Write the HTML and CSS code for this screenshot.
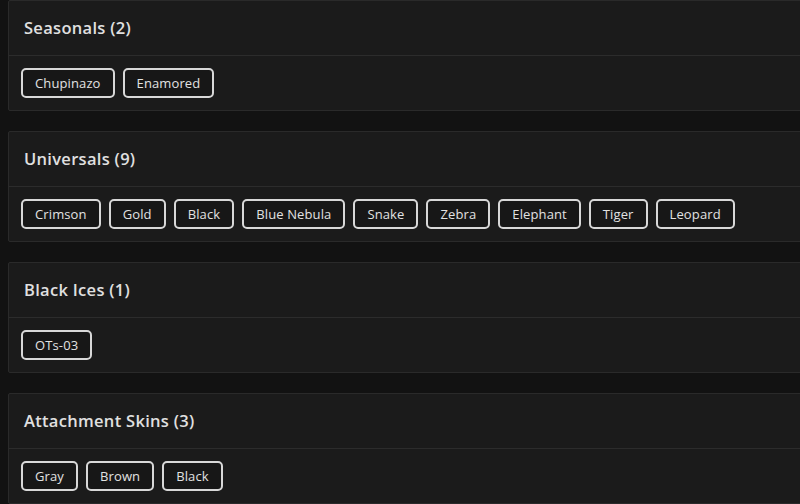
FILE: index.html
```html
<!DOCTYPE html>
<html>
<head>
<meta charset="utf-8">
<link rel="stylesheet" href="styles.css">
</head>
<body>
<div class="list">
  <section class="card">
    <div class="card-head">Seasonals (2)</div>
    <div class="card-body">
      <span class="chip">Chupinazo</span>
      <span class="chip">Enamored</span>
    </div>
  </section>
  <section class="card">
    <div class="card-head">Universals (9)</div>
    <div class="card-body">
      <span class="chip">Crimson</span>
      <span class="chip">Gold</span>
      <span class="chip">Black</span>
      <span class="chip">Blue Nebula</span>
      <span class="chip">Snake</span>
      <span class="chip">Zebra</span>
      <span class="chip">Elephant</span>
      <span class="chip">Tiger</span>
      <span class="chip">Leopard</span>
    </div>
  </section>
  <section class="card">
    <div class="card-head">Black Ices (1)</div>
    <div class="card-body">
      <span class="chip">OTs-03</span>
    </div>
  </section>
  <section class="card">
    <div class="card-head">Attachment Skins (3)</div>
    <div class="card-body">
      <span class="chip">Gray</span>
      <span class="chip">Brown</span>
      <span class="chip">Black</span>
    </div>
  </section>
</div>
</body>
</html>
```
FILE: styles.css
```css
html, body {
  margin: 0;
  padding: 0;
  background: #121212;
  overflow: hidden;
}
body {
  font-family: "Open Sans", "Noto Sans", sans-serif;
  color: #e6e6e6;
}
.list {
  display: flex;
  flex-direction: column;
  gap: 20px;
  padding-left: 8px;
  width: 810px;
}
.card {
  background: #1b1b1b;
  border: 1px solid #2a2a2a;
  border-radius: 2px;
}
.card-head {
  box-sizing: border-box;
  height: 55px;
  display: flex;
  align-items: center;
  padding: 0 0 2px 15px;
  font-size: 16.5px;
  font-weight: 600;
  letter-spacing: 0.3px;
  color: #e0e0e0;
  border-bottom: 1px solid #2c2c2c;
}
.card-body {
  height: 54px;
  display: flex;
  align-items: center;
  gap: 8px;
  padding-left: 12px;
}
.chip {
  box-sizing: border-box;
  height: 30px;
  display: inline-flex;
  align-items: center;
  padding: 0 12px;
  border: 2px solid #d8d8d8;
  border-radius: 5px;
  font-size: 13px;
  letter-spacing: 0.12px;
  color: #e2e2e2;
  background: #171717;
}
```
